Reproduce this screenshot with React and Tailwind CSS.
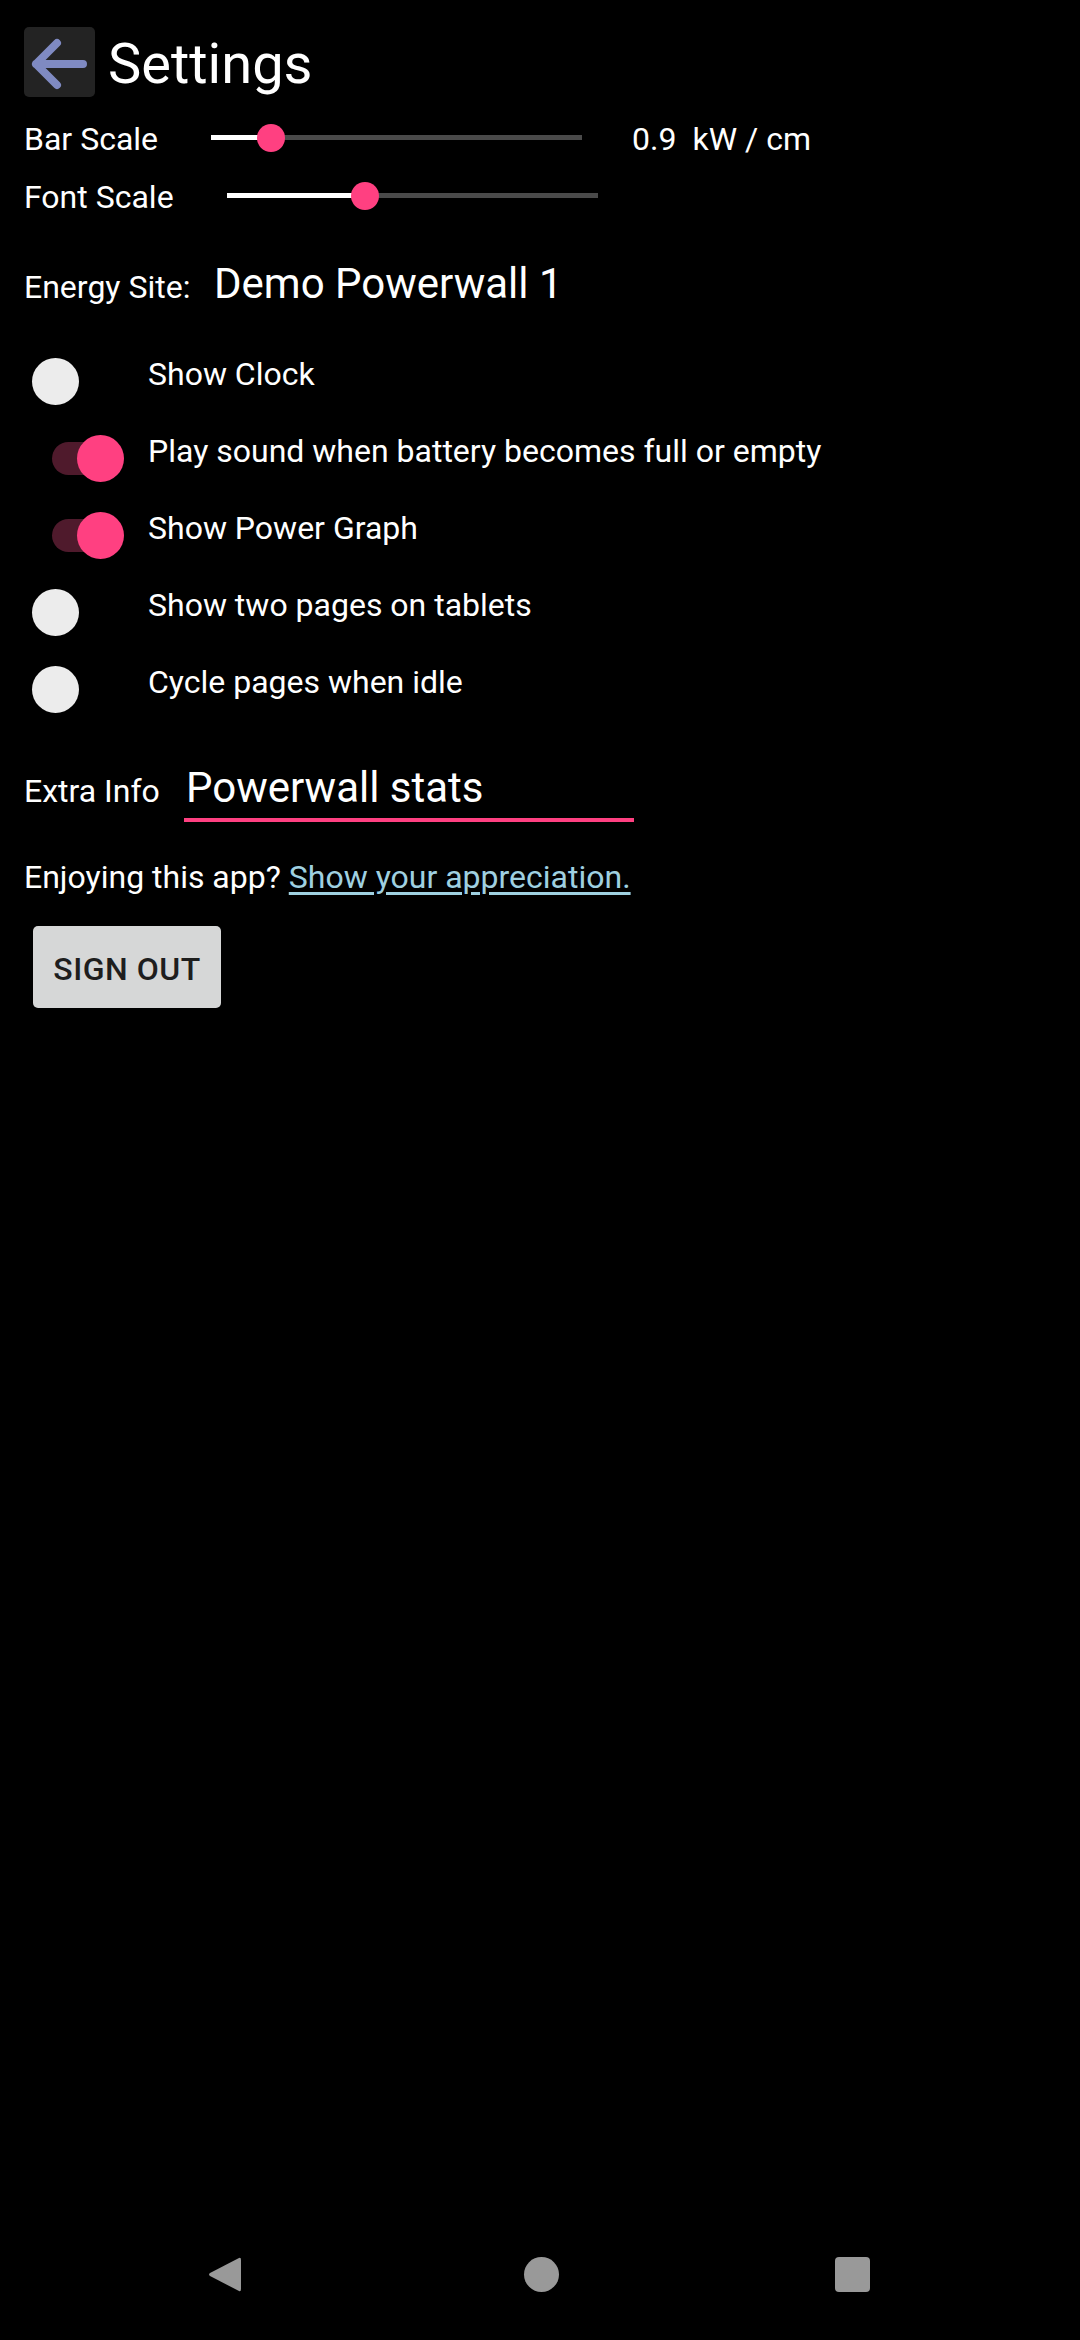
import React from "react";

const sliders = [
  { label: "Bar Scale", fill: 60 },
  { label: "Font Scale", fill: 138 },
];

const toggles = [
  { label: "Show Clock", on: false },
  { label: "Play sound when battery becomes full or empty", on: true },
  { label: "Show Power Graph", on: true },
  { label: "Show two pages on tablets", on: false },
  { label: "Cycle pages when idle", on: false },
];

function Slider({ fill }) {
  return (
    <div className="relative w-[371px] h-[28px]">
      <div className="absolute left-0 right-0 top-[11px] h-[5px] bg-[#4a4a4a]" />
      <div
        className="absolute left-0 top-[11px] h-[5px] bg-white"
        style={{ width: fill }}
      />
      <div
        className="absolute top-0 w-[28px] h-[28px] rounded-full bg-[#ff4081]"
        style={{ left: fill - 14 }}
      />
    </div>
  );
}

function Switch({ on }) {
  return (
    <div className="relative w-[92px] h-[47px] shrink-0">
      {on && (
        <div className="absolute left-[20px] top-[7px] w-[64px] h-[33px] rounded-full bg-[#4f1a2c]" />
      )}
      <div
        className={
          on
            ? "absolute left-[45px] top-0 w-[47px] h-[47px] rounded-full bg-[#ff4081]"
            : "absolute left-0 top-0 w-[47px] h-[47px] rounded-full bg-[#ececec]"
        }
      />
    </div>
  );
}

export default function App() {
  return (
    <div className="w-[1080px] h-[2340px] bg-black text-white font-['Roboto',sans-serif] flex flex-col">
      <div className="flex-1 px-[24px]">
        {/* header */}
        <div className="flex items-center mt-[27px] h-[70px]">
          <div className="w-[71px] h-[70px] rounded-[5px] bg-[#232323] flex items-center justify-center">
            <svg width="71" height="70" viewBox="0 0 71 70">
              <path
                d="M12 37 H59 M33 16 L12 37 L33 58"
                fill="none"
                stroke="#7f8ac2"
                strokeWidth="8"
                strokeLinecap="round"
                strokeLinejoin="round"
              />
            </svg>
          </div>
          <span className="ml-[13px] text-[56px] leading-none mt-[4px]">Settings</span>
        </div>

        {/* sliders */}
        <div className="mt-[12px]">
          {sliders.map((s, i) => (
            <div key={s.label} className="flex items-center h-[58px]">
              <span className="text-[32px] leading-none pt-[2px]">{s.label}</span>
              <div className="ml-[53px]">
                <Slider fill={s.fill} />
              </div>
              {i === 0 && (
                <span className="ml-[50px] text-[32px] leading-none pt-[2px]">
                  0.9<span className="ml-[16px]">kW / cm</span>
                </span>
              )}
            </div>
          ))}
        </div>

        {/* energy site */}
        <div className="flex items-baseline mt-[38px]">
          <span className="w-[190px] text-[32px] leading-none">Energy Site:</span>
          <span className="text-[42px] leading-none">Demo Powerwall 1</span>
        </div>

        {/* toggles */}
        <div className="mt-[38px]">
          {toggles.map((t) => (
            <div key={t.label} className="flex items-center h-[77px]">
              <div className="ml-[8px]">
                <Switch on={t.on} />
              </div>
              <span className="ml-[24px] mb-[15px] text-[32px] leading-none">{t.label}</span>
            </div>
          ))}
        </div>

        {/* extra info */}
        <div className="flex items-baseline mt-[39px]">
          <span className="w-[160px] text-[32px] leading-none">Extra Info</span>
          <div className="w-[450px] pb-[9px] border-b-4 border-[#ff4081]">
            <span className="pl-[2px] text-[42px] leading-none">Powerwall stats</span>
          </div>
        </div>

        {/* appreciation */}
        <div className="mt-[39px] text-[32px] leading-none">
          Enjoying this app?{" "}
          <a href="#" className="text-[#9fd0e0] underline underline-offset-[4px]">
            Show your appreciation.
          </a>
        </div>

        <button className="ml-[9px] mt-[33px] w-[188px] h-[82px] rounded-[5px] bg-[#d6d7d7] text-[#1e1e1e] text-[32px] font-medium tracking-[0.5px] pt-[3px]">
          SIGN OUT
        </button>
      </div>

      {/* nav bar */}
      <div className="h-[132px] flex items-center pl-[208px]">
        <svg width="33" height="37" viewBox="0 0 33 37">
          <path
            d="M31 2 Q33 1 33 4 V33 Q33 36 31 35 L2 20 Q0 18.5 2 17 Z"
            fill="#999999"
          />
        </svg>
        <div className="ml-[283px] w-[35px] h-[35px] rounded-full bg-[#999999]" />
        <div className="ml-[276px] w-[35px] h-[35px] rounded-[4px] bg-[#999999]" />
      </div>
    </div>
  );
}
